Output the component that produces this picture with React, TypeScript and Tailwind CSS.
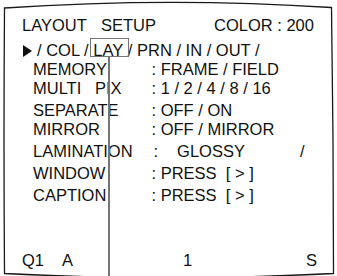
import React from "react"

type Row = { label: string; value: React.ReactNode; gap: string }

const rows: Row[] = [
  { label: "MEMORY", value: ": FRAME / FIELD", gap: "mt-0" },
  { label: "MULTI   PIX", value: ": 1 / 2 / 4 / 8 / 16", gap: "mt-0" },
  { label: "SEPARATE", value: ": OFF / ON", gap: "mt-[3px]" },
  { label: "MIRROR", value: ": OFF / MIRROR", gap: "mt-0" },
  {
    label: "LAMINATION",
    value: (
      <span className="flex">
        <span className="ml-[2px]">:</span>
        <span className="ml-[19px] w-[123px]">GLOSSY</span>
        <span>/</span>
      </span>
    ),
    gap: "mt-[3px]",
  },
  { label: "WINDOW", value: ": PRESS  [ > ]", gap: "mt-[3px]" },
  { label: "CAPTION", value: ": PRESS  [ > ]", gap: "mt-[3px]" },
]

export default function App() {
  return (
    <div className="relative w-[337px] h-[276px] overflow-hidden bg-white text-[#111] font-['Liberation_Sans',Arial,sans-serif] text-[16.5px] leading-[19px]">
      {/* screen outline */}
      <svg className="absolute inset-0" width="337" height="276" viewBox="0 0 337 276">
        <path
          d="M4.5 8 Q168 -3 331.5 7.5 Q333.5 140 333.5 273.5 Q168 282 4.5 273.5 Q3.5 140 4.5 8 Z"
          fill="none"
          stroke="#1a1a1a"
          strokeWidth="1.3"
        />
      </svg>

      <div className="relative flex flex-col h-full pt-[16px] pb-[6px] pl-[22px]">
        <div className="flex whitespace-pre">
          <span className="w-[79px]">LAYOUT</span>
          <span className="w-[113px]">SETUP</span>
          <span>COLOR : 200</span>
        </div>

        <div className="mt-[6px] flex items-center whitespace-pre">
          <span className="w-[15px] pl-[1px]">
            <svg width="9" height="12" viewBox="0 0 9 12" className="block mt-[1px]">
              <path d="M0 0 L9 6 L0 12 Z" fill="#111" />
            </svg>
          </span>
          <span>/ COL / </span>
          <span className="relative">
            LAY
            <span className="absolute left-[-3px] top-[-3px] w-[39px] h-[19px] border-[1.5px] border-[#757575]" />
            <span className="absolute left-[15px] top-[16px] w-[2px] h-[230px] bg-[#757575]" />
          </span>
          <span> / PRN / IN / OUT /</span>
        </div>

        {rows.map((r) => (
          <div key={r.label} className={`${r.gap} flex whitespace-pre pl-[11px]`}>
            <span className="w-[118.5px]">{r.label}</span>
            <span>{r.value}</span>
          </div>
        ))}

        <div className="mt-auto flex">
          <span className="w-[40px]">Q1</span>
          <span className="w-[121px]">A</span>
          <span className="w-[123px]">1</span>
          <span>S</span>
        </div>
      </div>
    </div>
  )
}
